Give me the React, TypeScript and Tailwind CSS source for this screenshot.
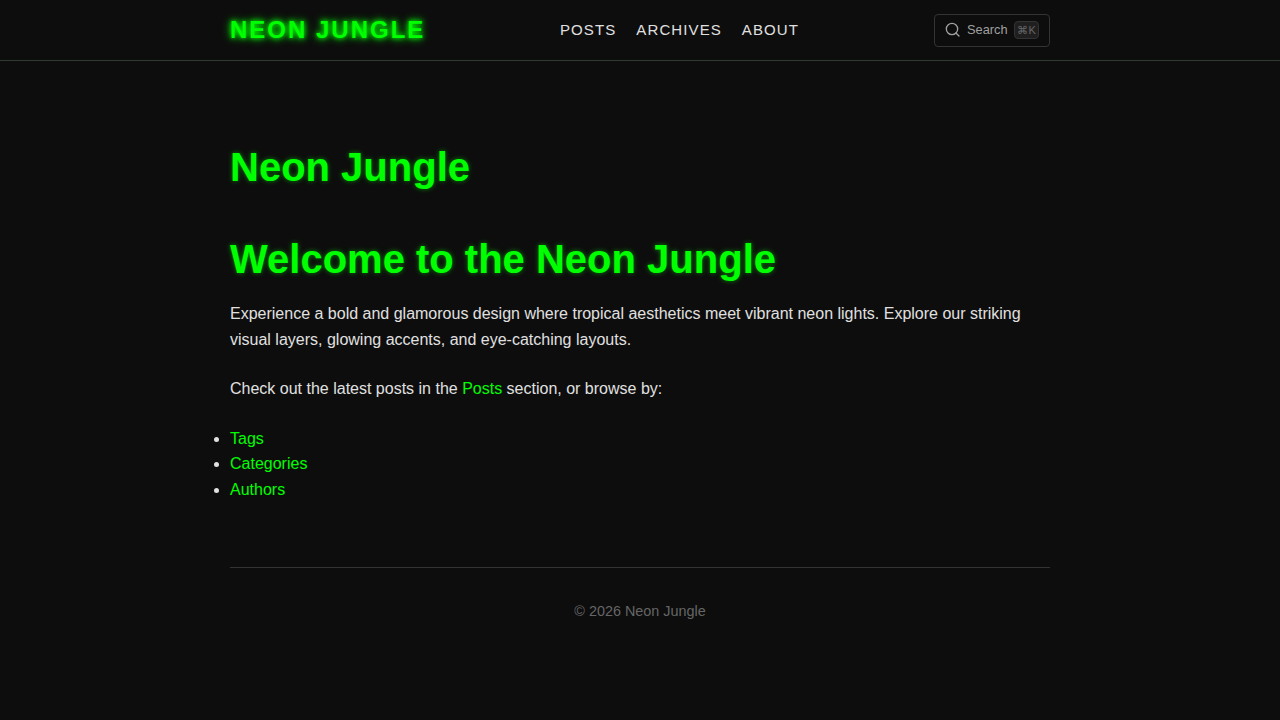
const App = () => {
    return (
        <div className="min-h-[720px] bg-[#0d0d0d] font-['Liberation_Sans',Arial,sans-serif] text-[#e0e0e0]">
            <header className="h-[61px] border-b border-[#2f3a32]">
                <div className="mx-auto flex h-[60px] w-[820px] items-center">
                    <a className="w-[330px] text-2xl font-bold tracking-[2px] text-[#00ff00] [text-shadow:0_0_5px_#00ff00,0_0_10px_#00ff00]">NEON JUNGLE</a>
                    <nav className="flex gap-5 text-[15px] tracking-[1.1px] text-[#e0e0e0]">
                        <a>POSTS</a>
                        <a>ARCHIVES</a>
                        <a>ABOUT</a>
                    </nav>
                    <div className="flex flex-1 justify-end">
                        <button className="flex h-[33px] w-[116px] items-center gap-[5px] rounded border border-[#333] pl-[10px] text-[12.8px] text-[#a0a0a0]">
                            <svg viewBox="0 0 24 24" className="h-4 w-4" fill="none" stroke="currentColor" strokeWidth="2" strokeLinecap="round">
                                <circle cx="10.5" cy="10.5" r="8.5" />
                                <path d="M21 21l-4.5-4.5" />
                            </svg>
                            <span className="ml-px">Search</span>
                            <kbd className="ml-[1.5px] flex h-[18px] w-[25px] items-center justify-center rounded border border-[#333] bg-[#1f1f1f] font-['Liberation_Sans',sans-serif] text-[11px] font-normal text-[#666]">⌘K</kbd>
                        </button>
                    </div>
                </div>
            </header>
            <main className="mx-auto w-[820px] pt-[80px]">
                <h1 className="text-[40px] leading-[52px] font-bold text-[#00ff00] [text-shadow:0_0_5px_rgba(0,255,0,0.5)]">Neon Jungle</h1>
                <h1 className="mt-10 text-[40px] leading-[52px] font-bold text-[#00ff00] [text-shadow:0_0_5px_rgba(0,255,0,0.5)]">Welcome to the Neon Jungle</h1>
                <p className="mt-4 leading-[25.6px]">Experience a bold and glamorous design where tropical aesthetics meet vibrant neon lights. Explore our striking visual layers, glowing accents, and eye-catching layouts.</p>
                <p className="mt-6 leading-[25.6px]">Check out the latest posts in the <a className="text-[#00ff00]">Posts</a> section, or browse by:</p>
                <ul className="mt-6 list-disc leading-[25.6px]">
                    <li><a className="text-[#00ff00]">Tags</a></li>
                    <li><a className="text-[#00ff00]">Categories</a></li>
                    <li><a className="text-[#00ff00]">Authors</a></li>
                </ul>
            </main>
            <footer className="mx-auto mt-16 w-[820px] border-t border-[#333] pt-[34px] text-center text-[14.4px] leading-[18px] text-[#666]">
                © 2026 Neon Jungle
            </footer>
        </div>
    );
};

export default App;
